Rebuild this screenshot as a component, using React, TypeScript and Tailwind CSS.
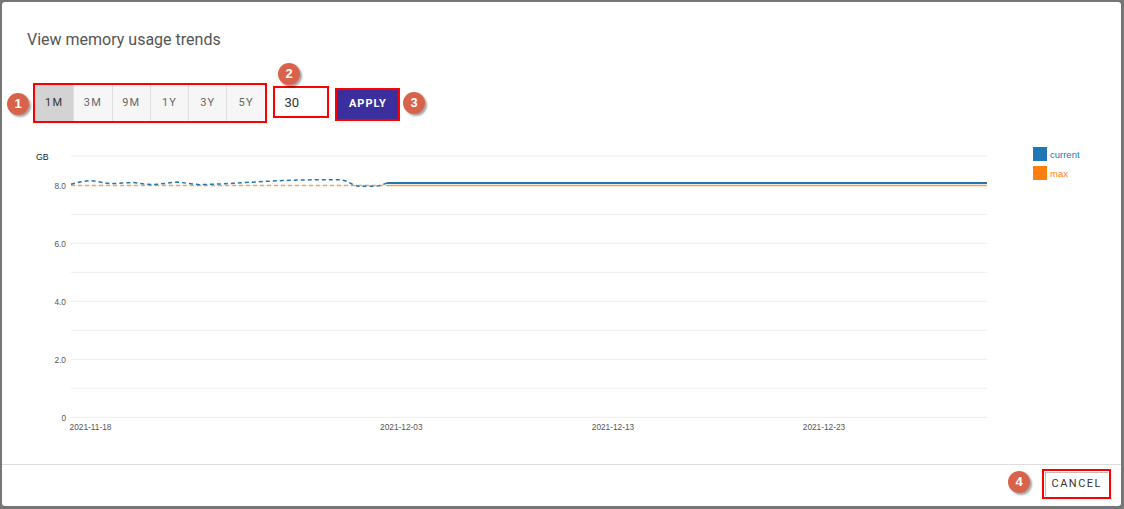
import { useState } from "react"

const ranges = ["1M", "3M", "9M", "1Y", "3Y", "5Y"]

// grid lines in screen coords (svg is shifted by the dialog offset)
const gridY = [156, 185.3, 214.3, 243.3, 272.3, 301.3, 330.3, 359.3, 388.3, 417.3]
const yTicks = [
  { label: "8.0", y: 185.8 },
  { label: "6.0", y: 243.8 },
  { label: "4.0", y: 301.8 },
  { label: "2.0", y: 359.8 },
  { label: "0", y: 417.5 },
]
const xTicks = [
  { label: "2021-11-18", x: 90.5 },
  { label: "2021-12-03", x: 401.3 },
  { label: "2021-12-13", x: 613 },
  { label: "2021-12-23", x: 824 },
]

const currentHistory: [number, number][] = [
  [71, 184.3], [80, 182], [90, 180.5], [100, 182], [110, 183.7], [122, 183.1],
  [133, 182.5], [143, 183.8], [153, 184.7], [165, 183.4], [177, 182], [189, 183.5],
  [200, 184.7], [215, 184.2], [233, 183.3], [250, 182.3], [267, 181.3], [283, 180.6],
  [300, 180], [320, 179.7], [340, 179.7], [346, 181], [352, 184], [358, 186.3],
  [373, 186.3], [379, 185.8], [383, 184.5], [387, 183],
]

function Badge({ n, className }: { n: number; className: string }) {
  return (
    <div
      className={
        "absolute flex h-[22px] w-[22px] items-center justify-center rounded-full bg-[#d9634a] text-[13px] font-bold text-white shadow-[2px_2px_2px_rgba(0,0,0,0.35)] " +
        className
      }
      style={{ fontFamily: "'Liberation Sans', Arial, sans-serif" }}
    >
      {n}
    </div>
  )
}

function TrendChart() {
  const pts = currentHistory.map(([x, y]) => `${x},${y}`).join(" ")
  return (
    <svg width="1119" height="341" className="block" style={{ fontFamily: "'Liberation Sans', Arial, sans-serif" }}>
      <g transform="translate(-2,-123)">
        {gridY.map((y) => (
          <line key={y} x1={71} x2={987} y1={y} y2={y} stroke="#ededed" strokeWidth={1} />
        ))}
        <text x={36} y={160} fontSize={8.8} fill="#222">GB</text>
        {yTicks.map((t) => (
          <text key={t.label} x={66} y={t.y + 3} fontSize={8.3} fill="#555" textAnchor="end">
            {t.label}
          </text>
        ))}
        {xTicks.map((t) => (
          <text key={t.label} x={t.x} y={429.5} fontSize={8.3} fill="#555" textAnchor="middle">
            {t.label}
          </text>
        ))}

        {/* history (dashed) */}
        <line x1={71} x2={387} y1={185.5} y2={185.5} stroke="#ff7f0e" strokeOpacity={0.7} strokeWidth={1.5} strokeDasharray="4 3" />
        <polyline points={pts} fill="none" stroke="#1f77b4" strokeWidth={1.5} strokeDasharray="4 3" strokeLinejoin="round" />

        {/* current (solid) */}
        <line x1={387} x2={987} y1={185.5} y2={185.5} stroke="#ff7f0e" strokeOpacity={0.75} strokeWidth={1.3} />
        <line x1={387} x2={987} y1={183} y2={183} stroke="#1f77b4" strokeWidth={1.8} />

        {/* legend */}
        <rect x={1033} y={147} width={14} height={14} fill="#1f77b4" />
        <text x={1050} y={157.5} fontSize={9.5} fill="#1f77b4">current</text>
        <rect x={1033} y={166} width={14} height={14} fill="#ff7f0e" />
        <text x={1050} y={176.5} fontSize={9.5} fill="#ff7f0e">max</text>
      </g>
    </svg>
  )
}

export default function App() {
  const [range, setRange] = useState("1M")
  const [days, setDays] = useState("30")

  return (
    <div className="flex h-[509px] w-[1124px] bg-[#767676] pb-[3px] pl-[2px] pr-[3px] pt-[2px]">
      <div
        className="relative flex flex-1 flex-col rounded-[3px] bg-white"
        style={{ fontFamily: "Roboto, 'Liberation Sans', Arial, sans-serif" }}
      >
        {/* Title */}
        <div className="pl-[25px] pt-[26px] text-[16px] leading-[24px] text-[#555]">
          View memory usage trends
        </div>

        {/* Controls */}
        <div className="mt-[31px] flex h-[40px] items-center pl-[31px]">
          <div className="flex h-[40px] border-2 border-[#f00]">
            {ranges.map((r, i) => (
              <button
                key={r}
                onClick={() => setRange(r)}
                className={
                  "flex h-[36px] w-[38.3px] items-center justify-center text-[11px] font-normal tracking-[1.2px] " +
                  (i > 0 ? "border-l border-[#e0e0e0] " : "") +
                  (range === r ? "bg-[#d3d3d3] text-[#333]" : "bg-[#f6f6f6] text-[#666]")
                }
              >
                {r}
              </button>
            ))}
          </div>
          <input
            value={days}
            onChange={(e) => setDays(e.target.value)}
            className="ml-[6.6px] mt-[-2px] h-[32px] w-[56px] border-2 border-[#f00] bg-white pl-[9px] text-[13px] text-[#333] outline-none"
          />
          <div className="ml-[6px] mt-[2px] h-[33px] w-[65px] border-2 border-[#f00]">
            <button className="flex h-full w-full items-center justify-center bg-[#3a2f9d] text-[11px] font-bold tracking-[1px] text-white">
              APPLY
            </button>
          </div>
        </div>

        {/* Chart */}
        <TrendChart />

        {/* Footer */}
        <div className="flex flex-1 justify-end border-t border-[#dedede] pr-[10px] pt-[4px]">
          <div className="h-[30px] w-[69.5px] border-2 border-[#f00] p-px">
            <button className="flex h-full w-full items-center justify-center border-l border-t border-[#bdbdbd] bg-white text-[11px] font-normal tracking-[1.5px] text-[#333]">
              CANCEL
            </button>
          </div>
        </div>

        <Badge n={1} className="left-[5px] top-[91px]" />
        <Badge n={2} className="left-[276px] top-[61px]" />
        <Badge n={3} className="left-[401px] top-[90px]" />
        <Badge n={4} className="left-[1006px] top-[469px]" />
      </div>
    </div>
  )
}
